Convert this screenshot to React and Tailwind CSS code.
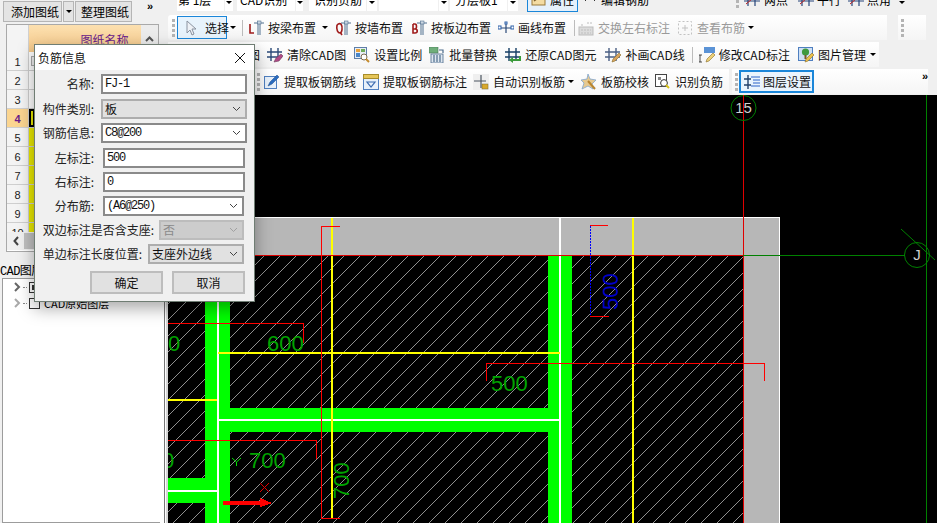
import React from "react";

const CJK = { fontFamily: '"Noto Sans CJK SC", "Liberation Sans", sans-serif' };

const Svg = ({ children }) => (
  <svg width="16" height="16" viewBox="0 0 16 16" className="shrink-0">
    {children}
  </svg>
);

const Pencil = ({ color = "#d9b24c" }) => (
  <path d="M7 15l1-3 6-6 2 2-6 6z" fill={color} stroke="#8a6d2a" strokeWidth="0.6" />
);

const Hash = ({ color = "#2b4a78" }) => (
  <path d="M4 1v13M11 1v13M0 5h15M0 10h15" stroke={color} strokeWidth="1.4" fill="none" />
);

const Beam = ({ letter, color = "#a01c1c" }) => (
  <Svg>
    <path d={letter} stroke={color} strokeWidth="1.6" fill="none" />
    <path d="M6 3h10M10 3v12M12 3v12" stroke="#51708f" strokeWidth="1" fill="none" />
    <rect x="9.5" y="1" width="3.5" height="3" fill="#c9d6e2" stroke="#51708f" strokeWidth="0.6" />
  </Svg>
);

const icons = {
  cursor: (
    <Svg>
      <path d="M4 1v12l3-3 2 5 2-1-2-5h4z" fill="#eef1f6" stroke="#8b93a0" strokeWidth="1" />
    </Svg>
  ),
  beam: <Beam letter="M2 4v9h4" />,
  wall: <Beam letter="M2 5c-1 5 1 8 3 8s3-6 1-9c-2-1-3 0-4 1M5 12l2 3" />,
  edge: <Beam letter="M2 4v9h2c3 0 3-4 0-4h-2M2 9h2c2 0 2-5 0-5h-2" />,
  line: (
    <Svg>
      <path d="M2 8h13M8 3v10" stroke="#2b4a78" strokeWidth="1.2" />
      <rect x="0" y="6" width="3" height="3" fill="#fff" stroke="#2b5fa8" />
      <rect x="13" y="6" width="3" height="3" fill="#fff" stroke="#2b5fa8" />
      <rect x="7" y="2" width="2" height="2" fill="#fff" stroke="#2b5fa8" />
    </Svg>
  ),
  swap: (
    <Svg>
      <rect x="1" y="7" width="14" height="8" fill="#dcdcdc" stroke="#bdbdbd" />
      <path d="M3 5h3M9 3h5M3 10h10M3 13h10" stroke="#bdbdbd" strokeWidth="1.2" strokeDasharray="2 1" />
    </Svg>
  ),
  look: (
    <Svg>
      <rect x="1.5" y="1.5" width="13" height="13" fill="none" stroke="#c2c2c2" strokeDasharray="2 2" />
      <path d="M5 8h6M8 5v6" stroke="#c2c2c2" />
    </Svg>
  ),
  clear: (
    <Svg>
      <Hash />
      <path d="M7 15l2-4 5-4 2 2-4 5z" fill="#b04a86" stroke="#6d3a5c" strokeWidth="0.6" />
    </Svg>
  ),
  scale: (
    <Svg>
      <rect x="0.5" y="0.5" width="12" height="11" fill="#e8eef6" stroke="#5f7fa8" />
      <rect x="2" y="2" width="4" height="3" fill="#e9a23b" />
      <rect x="7" y="2" width="4" height="3" fill="#6fae5a" />
      <rect x="2" y="6" width="4" height="4" fill="#4a86c8" />
      <circle cx="10" cy="10" r="3" fill="#fff" stroke="#7a6a4f" />
      <path d="M12 12l3 3" stroke="#c58b2d" strokeWidth="2" />
    </Svg>
  ),
  batch: (
    <Svg>
      <rect x="0" y="0" width="9" height="6" fill="#6fae7a" stroke="#47755a" strokeWidth="0.6" />
      <rect x="2" y="7" width="12" height="9" fill="#dfe7f0" stroke="#4a6a8a" strokeWidth="0.8" />
      <path d="M5 8v7M8 8v7M11 8v7" stroke="#2f5478" />
      <path d="M10 3h4v3" stroke="#4a6a8a" fill="none" strokeWidth="1.2" />
    </Svg>
  ),
  restore: (
    <Svg>
      <Hash color="#173f66" />
      <path d="M8 12h6v-3l2 0v5H8v2l-4-3 4-3z" fill="#3a9a3a" />
    </Svg>
  ),
  repair: (
    <Svg>
      <Hash color="#4a5f84" />
      <Pencil color="#d8a35c" />
    </Svg>
  ),
  modify: (
    <Svg>
      <path d="M1 8v7M0 8h3M0 15h3" stroke="#222" strokeWidth="0.8" />
      <path d="M5 0h11v6H5z" fill="#5b93d6" />
      <Pencil color="#ecd077" />
    </Svg>
  ),
  image: (
    <Svg>
      <rect x="0.5" y="0.5" width="14" height="13" fill="#cfe0f4" stroke="#4f7fc0" />
      <circle cx="7.5" cy="5" r="3.6" fill="#3f9a3f" />
      <rect x="6.5" y="8" width="2" height="4" fill="#7a5a2a" />
      <Pencil color="#eac04a" />
    </Svg>
  ),
  pickLine: (
    <Svg>
      <rect x="0.5" y="2.5" width="12" height="12" fill="#e7f0fa" stroke="#4f7fc0" />
      <path d="M4 12l2-4 7-7 2 2-7 7z" fill="#2a6cc0" stroke="#1d4a86" strokeWidth="0.5" />
    </Svg>
  ),
  pickMark: (
    <Svg>
      <rect x="0.5" y="0.5" width="15" height="15" fill="#e7f0fa" stroke="#4f7fc0" />
      <rect x="0.5" y="0.5" width="15" height="4" fill="#e6c659" stroke="#a88d2c" />
      <path d="M4 8h8l-4 5z" fill="none" stroke="#3a6ab0" strokeWidth="1.2" />
    </Svg>
  ),
  auto: (
    <Svg>
      <rect x="0" y="0" width="16" height="16" fill="#efefef" />
      <path d="M8 1v13M1 7h12" stroke="#4b5560" strokeWidth="1.2" />
      <rect x="9" y="10" width="6" height="5" fill="#d9a92c" stroke="#7a6a2f" strokeWidth="0.5" />
    </Svg>
  ),
  check: (
    <Svg>
      <path d="M7 0l2 5 6 1-4 4 1 5-5-3-6 3 2-6-3-3 6-1z" fill="#e6c98f" stroke="#7fa4cf" strokeWidth="0.8" />
      <path d="M7 7l7 8" stroke="#b98530" strokeWidth="2" />
    </Svg>
  ),
  find: (
    <Svg>
      <rect x="0.5" y="0.5" width="11" height="12" fill="#fff" stroke="#444" />
      <circle cx="9" cy="9" r="3.4" fill="#fff" stroke="#333" />
      <path d="M11 11l3 3" stroke="#d7c21a" strokeWidth="2" />
      <rect x="3" y="3" width="3" height="3" fill="#888" />
    </Svg>
  ),
  layer: (
    <Svg>
      <path d="M4 1v14M0 5h7M0 11h7" stroke="#22406a" strokeWidth="1.4" />
      <path d="M7 3h9M9 6h7M9 9h7M7 12h9" stroke="#2a62c8" strokeWidth="1" />
    </Svg>
  ),
  attr: (
    <Svg>
      <rect x="1" y="2" width="13" height="13" fill="#f4dca2" stroke="#9a7a3a" />
      <path d="M3 11l8-6" stroke="#7a5a2a" strokeWidth="1.4" />
    </Svg>
  ),
  edit: (
    <Svg>
      <path d="M1 8h14M1 8l3-3M1 8l3 3M15 8l-3-3M15 8l-3 3" stroke="#333" fill="none" />
    </Svg>
  ),
  cross: (
    <Svg>
      <path d="M4 0v16M11 0v16M0 11h16" stroke="#26457a" strokeWidth="1.2" />
      <path d="M2 14l12-10" stroke="#c02020" strokeWidth="1" />
    </Svg>
  ),
};

const Arrow = ({ className = "" }) => (
  <span className={`w-0 h-0 border-x-[3px] border-x-transparent border-t-[3px] border-t-black shrink-0 ${className}`} />
);

const Grip = ({ className = "" }) => (
  <span className={`flex flex-col gap-[2px] shrink-0 ${className}`}>
    {[0, 1, 2, 3].map((i) => (
      <span key={i} className="w-[3px] h-[3px] bg-[#b4b4b4]" />
    ))}
  </span>
);

const Sep = ({ className = "" }) => (
  <span className={`w-px h-[16px] bg-[#bcbcbc] shrink-0 ${className}`} />
);

const Tool = ({ icon, label, off, className = "" }) => (
  <span className={`flex items-center gap-[4px] whitespace-nowrap shrink-0 ${off ? "text-[#9a9a9a]" : "text-[#111]"} ${className}`}>
    {icons[icon]}
    {label}
  </span>
);

// the top row is scrolled mostly out of the window, only the lower part of its text shows
const TopText = ({ children, className = "" }) => (
  <span className={`-mt-[9px] shrink-0 whitespace-nowrap ${className}`}>{children}</span>
);

const TopIcon = ({ name, className = "" }) => (
  <span className={`-mt-[10px] shrink-0 ${className}`}>{icons[name]}</span>
);

const TopCombo = ({ label, w, arrowW = 8, gap = 4, pad = 3 }) => (
  <span className="flex gap-[1px] h-[11px] shrink-0 overflow-hidden" style={{ marginRight: gap }}>
    <span className="bg-white h-[11px] flex items-start overflow-hidden" style={{ width: w, paddingLeft: pad }}>
      <TopText>{label}</TopText>
    </span>
    <span className="bg-white h-[11px] flex justify-center items-start" style={{ width: arrowW }}>
      <Arrow className="mt-[1px]" />
    </span>
  </span>
);

const Toolbars = () => (
  <div className="h-[95px] bg-[#f0f0f0] text-[12px] overflow-hidden" style={CJK}>
    <div className="h-[12px] pl-[17px] flex items-start overflow-hidden">
      <TopCombo label="第 1层" w={47} gap={4} pad={1} />
      <TopCombo label="CAD识别" w={58} arrowW={7} gap={6} pad={3} />
      <TopCombo label="识别负筋" w={57} arrowW={10} gap={2} pad={5} />
      <TopCombo label="" w={59} arrowW={9} gap={2} />
      <TopCombo label="分层板1" w={57} arrowW={10} gap={9} pad={5} />
      <span className="w-[51px] h-[12px] border border-t-0 border-[#1a86d9] bg-[#e6f1fb] flex items-start gap-[3px] pl-[3px] overflow-hidden">
        <TopIcon name="attr" />
        <TopText>属性</TopText>
      </span>
      <span className="ml-[4px] flex items-start gap-[3px] h-[12px] overflow-hidden">
        <TopIcon name="edit" />
        <TopText>编辑钢筋</TopText>
      </span>
      <Grip className="ml-[87px] -mt-[10px]" />
      <span className="ml-[5px] flex items-start h-[12px] overflow-hidden">
        <TopIcon name="cross" />
        <TopText className="ml-[4px]">两点</TopText>
        <TopIcon name="cross" className="ml-[10px]" />
        <TopText className="ml-[3px]">平行</TopText>
        <TopIcon name="cross" className="ml-[7px]" />
        <TopText className="ml-[3px]">点角</TopText>
      </span>
      <Arrow className="ml-[8px] mt-[1px]" />
    </div>

    <div className="h-[25px] mt-[3px] flex">
      <div className="w-[719px] ml-[8px] bg-gradient-to-b from-white to-[#f5f5f5] rounded-l-[3px] flex items-center pl-[4px]">
        <Grip />
        <span className="ml-[2px] w-[50px] h-[23px] border border-[#1a86d9] bg-[#e8f3fc] flex items-center gap-[6px] pl-[5px] text-[#111] whitespace-nowrap shrink-0">
          {icons.cursor}
          选择
        </span>
        <Arrow className="ml-[3px]" />
        <Sep className="ml-[6px]" />
        <Tool icon="beam" label="按梁布置" className="ml-[5px]" />
        <Arrow className="ml-[6px]" />
        <Tool icon="wall" label="按墙布置" className="ml-[7px]" />
        <Tool icon="edge" label="按板边布置" className="ml-[8px]" />
        <Tool icon="line" label="画线布置" className="ml-[7px]" />
        <Sep className="ml-[8px]" />
        <Tool icon="swap" label="交换左右标注" off className="ml-[3px]" />
        <Tool icon="look" label="查看布筋" off className="ml-[7px]" />
        <Arrow className="ml-[3px] border-t-[#8a8a8a]" />
      </div>
      <div className="ml-[11px] w-[28px] bg-gradient-to-b from-white to-[#f5f5f5] flex items-center pl-[3px]">
        <Grip />
      </div>
    </div>

    <div className="h-[25px] mt-[2px] ml-[8px] w-[711px] bg-gradient-to-b from-white to-[#f5f5f5] flex items-center pl-[80px]">
      <span className="w-[12px]">图</span>
      <Tool icon="clear" label="清除CAD图" className="ml-[7px]" />
      <Tool icon="scale" label="设置比例" className="ml-[8px]" />
      <Tool icon="batch" label="批量替换" className="ml-[7px]" />
      <Tool icon="restore" label="还原CAD图元" className="ml-[8px]" />
      <Tool icon="repair" label="补画CAD线" className="ml-[9px]" />
      <Sep className="ml-[7px]" />
      <Tool icon="modify" label="修改CAD标注" className="ml-[6px]" />
      <Tool icon="image" label="图片管理" className="ml-[8px]" />
      <Arrow className="ml-[4px]" />
    </div>

    <div className="h-[25px] mt-[2px] flex">
      <div className="ml-[94px] w-[475px] bg-gradient-to-b from-white to-[#f5f5f5] flex items-center pl-[3px]">
        <Grip />
        <Tool icon="pickLine" label="提取板钢筋线" className="ml-[4px]" />
        <Tool icon="pickMark" label="提取板钢筋标注" className="ml-[7px]" />
        <Tool icon="auto" label="自动识别板筋" className="ml-[6px]" />
        <Arrow className="ml-[3px]" />
        <Tool icon="check" label="板筋校核" className="ml-[7px]" />
        <Tool icon="find" label="识别负筋" className="ml-[6px]" />
      </div>
      <div className="ml-[3px] w-[196px] bg-gradient-to-b from-white to-[#f5f5f5] flex items-center pl-[3px] relative">
        <Grip />
        <span className="ml-[1px] w-[75px] h-[23px] border-2 border-[#1a86d9] bg-[#eaf4fd] flex items-center gap-[3px] pl-[3px] text-[#111] whitespace-nowrap shrink-0">
          {icons.layer}
          图层设置
        </span>
        <span className="ml-[108px] -mt-[11px] text-[11px] font-bold leading-none" style={{ fontFamily: '"Liberation Sans", sans-serif' }}>»</span>
      </div>
    </div>
  </div>
);

const NUM_ROWS = [1, 2, 3, 4, 5, 6, 7, 8, 9, 10];

const TreeChevron = ({ color }) => (
  <svg width="7" height="10" viewBox="0 0 7 10" className="shrink-0">
    <path d="M1 1l4 4-4 4" fill="none" stroke={color} strokeWidth="2" />
  </svg>
);

const LeftPanel = () => (
  <div className="w-[160px] shrink-0 h-[523px] bg-[#f0f0f0] flex flex-col overflow-hidden text-[12px]" style={CJK}>
    <div className="h-[24px] flex items-start pt-[1px] pl-[3px]">
      <span className="w-[59px] h-[21px] border border-[#b5b5b5] bg-[#e4e4e4] flex items-center justify-center pl-[5px]">添加图纸</span>
      <span className="ml-[1px] w-[11px] h-[21px] border border-[#b5b5b5] bg-[#e4e4e4] flex items-center justify-center"><Arrow /></span>
      <span className="ml-[1px] w-[57px] h-[21px] border border-[#b5b5b5] bg-[#e4e4e4] flex items-center justify-center pl-[3px]">整理图纸</span>
      <span className="ml-[15px] text-[11px] font-bold leading-none" style={{ fontFamily: '"Liberation Sans", sans-serif' }}>»</span>
    </div>
    <div className="ml-[6px] w-[153px] h-[228px] border border-[#a9a9a9] bg-white overflow-hidden flex flex-col">
      <div className="h-[27px] shrink-0 flex">
        <span className="w-[22px] bg-[#f4f4f4] border-r border-[#d0d0d0]" />
        <span className="w-[112px] bg-gradient-to-b from-[#fce0b0] to-[#f6c988] text-[#6a1b8a] text-[12px] flex items-center justify-center pl-[39px] pt-[2px]">图纸名称</span>
        <span className="w-[17px] bg-[#ececec] flex items-center justify-center">
          <svg width="9" height="6" viewBox="0 0 9 6">
            <path d="M1 5l3.5-3.5L8 5" fill="none" stroke="#555" strokeWidth="2" />
          </svg>
        </span>
      </div>
      <div className="h-[180px] overflow-hidden">
        {NUM_ROWS.map((n) => (
          <div key={n} className="h-[19px] flex border-b border-[#cfcfcf]">
            <span className={`w-[22px] border-r border-[#cfcfcf] flex items-center justify-center pt-[2px] text-[11px] ${n === 4 ? "bg-[#fbd590] text-[#6a1b8a] font-bold" : "bg-[#f4f4f4] text-[#222]"}`} style={{ fontFamily: '"Liberation Sans", sans-serif' }}>
              {n}
            </span>
            {n === 1 && <span className="ml-[2px] mt-[4px] w-[4px] h-[10px] border border-[#aaa] bg-[#f0f0f0]" />}
            {n >= 4 && <span className={`w-[6px] bg-[#e8e800] ${n === 4 ? "outline-2 -outline-offset-2 outline-black" : ""}`} />}
          </div>
        ))}
      </div>
      <div className="h-[18px] shrink-0 bg-[#f0f0f0] flex items-center">
        <svg width="7" height="10" viewBox="0 0 7 10" className="ml-[6px]">
          <path d="M5 1L1.5 5 5 9" fill="none" stroke="#444" strokeWidth="2" />
        </svg>
        <span className="ml-[4px] w-[100px] h-[16px] bg-[#c0c0c0]" />
      </div>
    </div>
    <span className="mt-[10px] h-[16px] text-[12px] leading-[16px] tracking-[-0.6px] whitespace-nowrap">
      <span style={{ fontFamily: '"Liberation Mono", monospace' }}>CAD</span>图层
    </span>
    <div className="ml-[2px] mr-[-5px] flex-1 border border-[#9c9c9c] bg-white pl-[11px]">
      <div className="h-[16px] flex items-center gap-[2px]">
        <TreeChevron color="#666" />
        <span className="w-[4px] border-t border-dotted border-[#888]" />
        <span className="w-[11px] h-[11px] border border-[#333] p-[2px]"><span className="block w-full h-full bg-[#333]" /></span>
      </div>
      <div className="h-[16px] flex items-center gap-[2px]">
        <TreeChevron color="#aaa" />
        <span className="w-[4px] border-t border-dotted border-[#888]" />
        <span className="w-[11px] h-[11px] border border-[#333]" />
        <span className="ml-[2px] text-[11px] whitespace-nowrap">CAD原始图层</span>
      </div>
    </div>
  </div>
);

const Chevron = ({ className = "" }) => (
  <svg width="9" height="6" viewBox="0 0 9 6" className={`shrink-0 ${className}`}>
    <path d="M1 1l3.5 3.5L8 1" fill="none" stroke="currentColor" strokeWidth="1" />
  </svg>
);

const MONO = { fontFamily: '"Liberation Mono", monospace', letterSpacing: "-1.2px" };

const Field = ({ value, className = "" }) => (
  <div className={`h-[20px] border-2 border-[#8a8a8a] bg-white flex items-center pl-[2px] text-[12px] text-[#111] ${className}`} style={MONO}>
    {value}
  </div>
);

const Picker = ({ value, mono, tone = "white", className = "" }) => {
  const tones = {
    white: "bg-white border-[#8a8a8a] text-[#111]",
    gray: "bg-[#e1e1e1] border-[#adadad] text-[#111]",
    off: "bg-[#cccccc] border-[#bcbcbc] text-[#8a8a8a]",
  };
  return (
    <div className={`h-[20px] border-2 flex items-center justify-between pl-[2px] pr-[4px] ${tones[tone]} ${className}`}>
      <span className="text-[12px] whitespace-nowrap" style={mono ? MONO : CJK}>{value}</span>
      <Chevron className={tone === "off" ? "text-[#a0a0a0]" : "text-[#444]"} />
    </div>
  );
};

const Label = ({ children, className = "" }) => (
  <span className={`text-right text-[12px] text-[#222] whitespace-nowrap shrink-0 ${className}`}>{children}</span>
);

const RebarDialog = () => (
  <div className="absolute left-[34px] top-[44px] w-[221px] h-[258px] border border-[#6f7d73] bg-[#f0f0f0] shadow-[0_6px_16px_rgba(0,0,0,0.35)]" style={CJK}>
    <div className="h-[25px] bg-white flex items-center justify-between pl-[3px] pr-[8px]">
      <span className="text-[12px] text-[#111]">负筋信息</span>
      <svg width="12" height="12" viewBox="0 0 12 12">
        <path d="M1 1l10 10M11 1L1 11" stroke="#111" strokeWidth="1" />
      </svg>
    </div>
    <div className="pt-[4px] flex flex-col">
      <div className="flex items-center">
        <Label className="w-[59px]">名称:</Label>
        <Field value="FJ-1" className="ml-[7px] w-[146px]" />
      </div>
      <div className="flex items-center mt-[5px]">
        <Label className="w-[59px]">构件类别:</Label>
        <Picker value="板" tone="gray" className="ml-[7px] w-[146px]" />
      </div>
      <div className="flex items-center mt-[4px]">
        <Label className="w-[59px]">钢筋信息:</Label>
        <Picker value="C8@200" mono className="ml-[7px] w-[146px]" />
      </div>
      <div className="flex items-center mt-[5px]">
        <Label className="w-[59px]">左标注:</Label>
        <Field value="500" className="ml-[9px] w-[142px]" />
      </div>
      <div className="flex items-center mt-[4px]">
        <Label className="w-[59px]">右标注:</Label>
        <Field value="0" className="ml-[9px] w-[142px]" />
      </div>
      <div className="flex items-center mt-[4px]">
        <Label className="w-[59px]">分布筋:</Label>
        <Picker value="(A6@250)" mono className="ml-[9px] w-[141px]" />
      </div>
      <div className="flex items-center mt-[4px]">
        <Label className="ml-[6px] w-[113px]">双边标注是否含支座:</Label>
        <Picker value="否" tone="off" className="ml-[5px] w-[85px]" />
      </div>
      <div className="flex items-center mt-[4px]">
        <Label className="ml-[6px] w-[101px]">单边标注长度位置:</Label>
        <Picker value="支座外边线" tone="gray" className="ml-[6px] w-[96px]" />
      </div>
      <div className="flex mt-[7px] ml-[55px] gap-[9px]">
        <button className="w-[73px] h-[23px] border-2 border-[#bdbdbd] bg-[#e1e1e1] text-[12px] text-[#111]">确定</button>
        <button className="w-[73px] h-[23px] border-2 border-[#bdbdbd] bg-[#e1e1e1] text-[12px] text-[#111]">取消</button>
      </div>
    </div>
  </div>
);

const NUM = { fontFamily: '"Liberation Sans", sans-serif', fontSize: 22, fill: "#00a400" };

// drawing uses page coordinates through the viewBox
const CadCanvas = () => (
  <svg viewBox="168 95 769 428" width="769" height="428" className="block bg-black" shapeRendering="crispEdges">
    <defs>
      <pattern id="hatch" width="16" height="16" patternUnits="userSpaceOnUse" patternTransform="translate(8 0)">
        <path d="M-2 18L18 -2M-2 2L2 -2M14 18L18 14" stroke="#b4b4b4" strokeWidth="0.8" shapeRendering="auto" />
      </pattern>
    </defs>

    {/* slab edge */}
    <rect x="168" y="217" width="612" height="306" fill="#fff" />
    <rect x="168" y="218" width="611" height="305" fill="#b7b7b7" />
    <rect x="168" y="255" width="575" height="268" fill="#000" />
    <rect x="168" y="255" width="575" height="268" fill="url(#hatch)" />

    {/* green bands */}
    <rect x="548" y="255" width="24" height="268" fill="#00ff00" />
    <rect x="205" y="255" width="25" height="268" fill="#00ff00" />
    <rect x="219" y="408" width="341" height="24" fill="#00ff00" />
    <rect x="168" y="478" width="49" height="25" fill="#00ff00" />
    <rect x="559" y="218" width="2" height="203" fill="#fff" />
    <rect x="559" y="421" width="2" height="102" fill="#fff" />
    <rect x="217" y="255" width="2" height="268" fill="#fff" />
    <rect x="219" y="419" width="342" height="2" fill="#fff" />
    <rect x="168" y="490" width="49" height="2" fill="#fff" />

    {/* yellow */}
    <path d="M332 218V518M633 218V523" stroke="#ffff00" strokeWidth="2" />
    <path d="M218 353H560M168 400H217" stroke="#ffff00" strokeWidth="2" />

    {/* axis */}
    <path d="M743.5 95V523" stroke="#e00000" />
    <path d="M168 255.5H743" stroke="#e00000" />
    <path d="M743 255.5H905" stroke="#008000" />
    <path d="M926.5 95V523" stroke="#008000" />
    <path d="M901 229L935 260" stroke="#008000" shapeRendering="auto" />
    <circle cx="743.5" cy="108" r="12.5" fill="#000" stroke="#008000" shapeRendering="auto" />
    <path d="M743.5 120V95" stroke="#e00000" />
    <circle cx="917" cy="255" r="12.5" fill="none" stroke="#008000" shapeRendering="auto" />
    <text x="743.5" y="113" textAnchor="middle" fontSize="15" fill="#d0d0d0" fontFamily="Liberation Sans, sans-serif">15</text>
    <text x="917" y="260" textAnchor="middle" fontSize="15" fill="#d0d0d0" fontFamily="Liberation Sans, sans-serif">J</text>

    {/* red marks */}
    <path d="M168 323.5H303.5V343M321.5 226V518.5H340M321 226.5H340M168 440.5H316.5V459M486.5 381V363.5H764.5V381M590 225.5H608M590 316.5H609" fill="none" stroke="#ff0000" />
    <path d="M590.5 226V316" stroke="#0000ff" strokeDasharray="2 1" />

    {/* dimension text */}
    <text x="267" y="351" style={NUM}>600</text>
    <text x="491" y="391" style={NUM}>500</text>
    <text x="249" y="468" style={NUM}>700</text>
    <text x="168" y="351" style={NUM}>0</text>
    <text x="162" y="468" style={NUM}>0</text>
    <text transform="translate(349 499) rotate(-90)" style={NUM}>700</text>
    <text transform="translate(618 310) rotate(-90)" style={{ ...NUM, fill: "#0000c8" }}>500</text>

    {/* small cursor marks */}
    <path d="M236.5 462V466M236.5 462L232 458M236.5 462L241 458" stroke="#00e000" fill="none" shapeRendering="auto" />
    <path d="M260 483L269 492M269 483L260 492" stroke="#e00000" shapeRendering="auto" />
    <path d="M223 501H260V498L272 503L260 507V505H223z" fill="#ff0000" />
  </svg>
);

export default function App() {
  return (
    <div className="relative w-[937px] h-[523px] overflow-hidden flex bg-[#f0f0f0]">
      <LeftPanel />
      <div className="flex-1 min-w-0 flex flex-col">
        <Toolbars />
        <div className="flex">
          <div className="w-[8px] h-[428px] bg-white flex">
            <span className="ml-[4px] w-px bg-[#777]" />
            <span className="ml-[1px] w-[2px] bg-[#d8d8d8]" />
          </div>
          <CadCanvas />
        </div>
      </div>
      <RebarDialog />
    </div>
  );
}
